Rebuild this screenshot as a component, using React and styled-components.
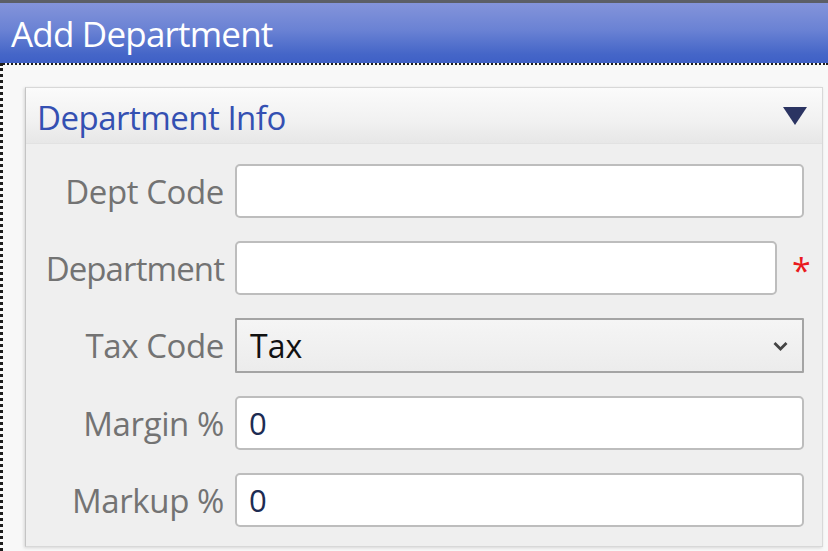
import React from "react";
import styled, { createGlobalStyle } from "styled-components";

const Global = createGlobalStyle`
  html, body { margin: 0; padding: 0; background: #f7f7f7; }
  body { font-family: "Open Sans", "Noto Sans", sans-serif; }
  * { box-sizing: border-box; }
`;

const Page = styled.div`
  width: 828px;
  height: 551px;
  overflow: hidden;
  display: flex;
  flex-direction: column;
  background: #f7f7f7;
`;

const TopLine = styled.div`
  height: 3px;
  background: #5c5f66;
  flex: none;
`;

const TitleBar = styled.div`
  height: 60px;
  flex: none;
  display: flex;
  align-items: center;
  padding-left: 11px;
  background: linear-gradient(to bottom, #8494da 0%, #6a82d4 45%, #4566c8 85%, #3f60c6 100%);
  color: #ffffff;
  font-size: 35px;
  letter-spacing: -0.8px;
`;

const Content = styled.div`
  flex: 1;
  border-top: 2px dotted #1c1c1c;
  border-left: 3px dotted #1c1c1c;
  padding: 22px 5px 0 22px;
  background: #f8f8f8;
`;

const Panel = styled.div`
  border: 1px solid #d8d8d8;
  border-left-color: #c4c4c4;
  box-shadow: -1px 1px 3px rgba(0, 0, 0, 0.14);
  background: #efefef;
  height: 460px;
`;

const PanelHeader = styled.div`
  height: 56px;
  display: flex;
  align-items: center;
  justify-content: space-between;
  padding: 0 15px 0 11px;
  background: linear-gradient(to bottom, #fbfbfb 0%, #f1f1f1 60%, #e7e7e7 100%);
  border-bottom: 1px solid #e2e2e2;
`;

const PanelTitle = styled.div`
  color: #3450b2;
  font-size: 33px;
  letter-spacing: -0.5px;
  padding-top: 4px;
`;

const Form = styled.div`
  display: grid;
  grid-template-columns: 198px 1fr;
  column-gap: 11px;
  row-gap: 23px;
  padding: 20px 18px 0 0;
`;

const Label = styled.label`
  text-align: right;
  align-self: center;
  color: #737373;
  font-size: 33px;
  white-space: nowrap;
  letter-spacing: ${(p) => (p.$tight ? "-0.9px" : "-0.4px")};
`;

const Control = styled.div`
  display: flex;
  align-items: center;
`;

const TextBox = styled.div`
  flex: 1;
  height: 54px;
  background: #ffffff;
  border: 2px solid #bdbdbd;
  border-radius: 5px;
  display: flex;
  align-items: center;
  padding-left: 12px;
  color: #1d2c52;
  font-size: 31px;
`;

const Select = styled.div`
  flex: 1;
  height: 55px;
  background: linear-gradient(to bottom, #f5f5f5 0%, #ececec 100%);
  border: 2px solid #a4a4a4;
  border-radius: 1px;
  display: flex;
  align-items: center;
  justify-content: space-between;
  padding: 0 14px 0 13px;
  color: #111111;
  font-size: 32px;
`;

const Required = styled.span`
  width: 27px;
  flex: none;
  padding-left: 15px;
  margin-top: 4px;
  color: #ea1a20;
  font-size: 34px;
  line-height: 1;
  overflow: visible;
  white-space: nowrap;
`;

const Collapse = () => (
  <svg width="24" height="18" viewBox="0 0 24 18">
    <path d="M0 0 H24 L12 18 Z" fill="#2b3462" />
  </svg>
);

const Chevron = () => (
  <svg width="15" height="10" viewBox="0 0 15 10">
    <path d="M1.5 2 L7.5 8 L13.5 2" fill="none" stroke="#444" strokeWidth="2.8" />
  </svg>
);

const fields = [
  { label: "Dept Code", value: "" },
  { label: "Department", value: "", required: true, tight: true },
  { label: "Tax Code", value: "Tax", select: true },
  { label: "Margin %", value: "0" },
  { label: "Markup %", value: "0" },
];

export default function App() {
  return (
    <Page>
      <Global />
      <TopLine />
      <TitleBar>Add Department</TitleBar>
      <Content>
        <Panel>
          <PanelHeader>
            <PanelTitle>Department Info</PanelTitle>
            <Collapse />
          </PanelHeader>
          <Form>
            {fields.map((f) => (
              <React.Fragment key={f.label}>
                <Label $tight={f.tight}>{f.label}</Label>
                <Control>
                  {f.select ? (
                    <Select>
                      <span>{f.value}</span>
                      <Chevron />
                    </Select>
                  ) : (
                    <TextBox>{f.value}</TextBox>
                  )}
                  {f.required && <Required>*</Required>}
                </Control>
              </React.Fragment>
            ))}
          </Form>
        </Panel>
      </Content>
    </Page>
  );
}
